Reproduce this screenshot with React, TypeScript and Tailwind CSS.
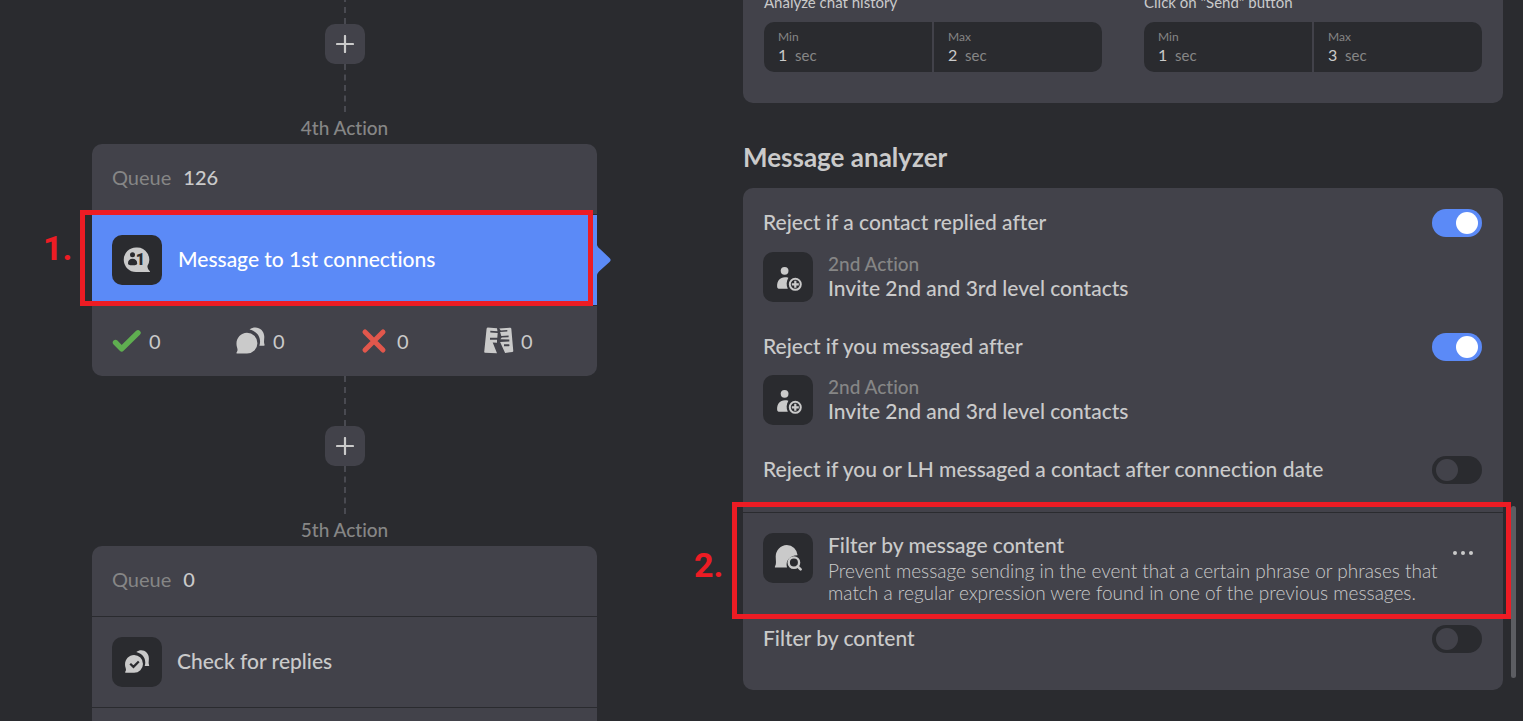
import type { ReactNode } from "react";

function MessageFirstIcon() {
  return (
    <svg viewBox="0 0 28 26" className="h-[26px] w-7" aria-hidden="true">
      <path d="M13 0.5a12.2 12.2 0 1 0 0 24.5h13.6c.5 0 .6-.5.3-.8-1.6-1.5-2.4-2.8-2.5-5.200A12.200 12.200 0 0 0 13 .5z" fill="#cacaca" />
      <circle cx="9.500" cy="7.800" r="2.500" fill="#2a2b2f" />
      <path d="M5 16.300c0-3 1.800-4.500 4.500-4.500s4.700 1.500 4.700 4.500c0 1.600-1 2-4.600 2s-4.600-.4-4.600-2z" fill="#2a2b2f" />
      <text x="12.800" y="18.300" fontFamily="Roboto, sans-serif" fontWeight="900" fontSize="16" fill="#2a2b2f">1</text>
    </svg>
  );
}

function InviteIcon() {
  return (
    <svg viewBox="-2.1 -3 28 28" className="size-7" aria-hidden="true">
      <circle cx="8.500" cy="4.800" r="3.900" fill="#cacaca" />
      <path d="M12.300 11.800C5 9.800 1 14 1 20.200c0 1.900.8 2.600 2.800 2.600h7.900c-1.700-3.400-1.500-7.300.6-11z" fill="#cacaca" />
      <circle cx="19.200" cy="18.300" r="5.500" fill="none" stroke="#cacaca" strokeWidth="2" />
      <path d="M19.200 14.800v7M15.700 18.300h7" stroke="#cacaca" strokeWidth="2.200" />
    </svg>
  );
}

function SearchMessageIcon() {
  return (
    <svg viewBox="0 0 28 28" className="size-7" aria-hidden="true">
      <path d="M12.800 1A11.300 11.300 0 0 0 1.700 12.300c0 4.500.9 7.500-.6 10-.5.8-.3 1.200.5 1.200H13c-1.800-6.500 2.500-12 10.600-12.200A11.300 11.300 0 0 0 12.800 1z" fill="#cacaca" />
      <circle cx="19.900" cy="18.600" r="5.200" fill="none" stroke="#cacaca" strokeWidth="2.400" />
      <path d="M23.600 22.300l3 3" stroke="#cacaca" strokeWidth="2.600" strokeLinecap="round" />
    </svg>
  );
}

function ChatBubbles({ check = false }: { check?: boolean }) {
  return (
    <>
      <path d="M11 5.800A10.200 10.200 0 0 1 11 26.600H1.300c-.9 0-1-.6-.6-1.300 1-1.500 1-2.300.5-4.300C-1.500 13.500 3.500 5.800 11 5.800z" fill="#cacaca" />
      <path d="M13.600 2.400C20-2.400 28.300 2 28.300 9.800c0 3-.8 4.900.2 7.600.3.900.1 1.400-.6 1.400h-4.500C25.800 10.800 21.500 4.500 13.600 2.400z" fill="#cacaca" />
      {check && <path d="M6.500 16l3.800 3.700 6.200-6.200" fill="none" stroke="#2a2b2f" strokeWidth="2.600" />}
    </>
  );
}

function TornPaper() {
  return (
    <>
      <path d="M3.500.6L13 1.200l.5 3.100-7.200-.5v1.700l7.400.5-.4 4.800H6v2h7v3l-4.300-.3 4.300 10.800L.7 25.800.2 24.900 2.600 1.400z" fill="#cacaca" />
      <path d="M15.300 1.400L26.500.7l.8.8 2 22.800-.8.8-7.400.8-5-10.900 9.200-.6v-1.800l-9-.3 1.500-1.700 6.800-.3V8.500l-7.300.4-1.200-4 7.200-.3V3l-6.500.4zM20 17.300v2h4.600c1.200 0 1.200-2 0-2z" fill="#cacaca" fillRule="evenodd" />
    </>
  );
}

function IconTile({ children }: { children: ReactNode }) {
  return (
    <span className="flex size-[50px] shrink-0 items-center justify-center rounded-[10px] bg-[#2a2b2f]">{children}</span>
  );
}

function Dashes({ tall = false }: { tall?: boolean }) {
  return (
    <span
      className={
        tall
          ? "block h-[50px] w-0 shrink-0 border-l-2 border-dashed border-[#494a51]"
          : "block h-12 w-0 shrink-0 border-l-2 border-dashed border-[#494a51]"
      }
    />
  );
}

function AddButton() {
  return (
    <button type="button" aria-label="Add action" className="flex size-10 shrink-0 items-center justify-center rounded-[10px] bg-[#42424a]">
      <svg viewBox="0 0 18 18" className="size-[18px]" aria-hidden="true">
        <path d="M9 1v16M1 9h16" stroke="#cacaca" strokeWidth="2.200" strokeLinecap="round" />
      </svg>
    </button>
  );
}

function StepLabel({ children }: { children: ReactNode }) {
  return <h3 className="flex h-8 shrink-0 items-center text-[19px] font-medium text-[#868686]">{children}</h3>;
}

function Queue({ count }: { count: number }) {
  return (
    <div className="flex h-[70px] items-center gap-3 px-5 pb-1 text-xl">
      <span className="text-[#868686]">Queue</span>
      <span className="font-medium">{count}</span>
    </div>
  );
}

function Stat({ label, icon }: { label: string; icon: ReactNode }) {
  return (
    <li className="flex w-[124px] shrink-0 items-center gap-[7px] text-xl last:w-auto">
      <svg viewBox="0 0 30 28" className="h-7 w-[30px]" role="img" aria-label={label}>
        {icon}
      </svg>
      <span>0</span>
    </li>
  );
}

function Toggle({ label, on = false }: { label: string; on?: boolean }) {
  return (
    <label className="flex h-7 items-center justify-between pr-px text-[21px] leading-[26px] font-medium">
      <span className="pb-[2px]">{label}</span>
      <input
        type="checkbox"
        defaultChecked={on}
        className="h-7 w-[50px] shrink-0 appearance-none rounded-full bg-[#2a2b2f] px-1 py-[3px] before:block before:size-[22px] before:rounded-full before:bg-[#42424a] checked:bg-[#5b8af7] checked:before:ml-5 checked:before:bg-white"
      />
    </label>
  );
}

function ActionRef() {
  return (
    <div className="flex items-center gap-[15px]">
      <IconTile>
        <InviteIcon />
      </IconTile>
      <div className="pb-[2px] font-medium">
        <p className="text-[19px] leading-6 text-[#868686]">2nd Action</p>
        <p className="text-[21px] leading-6">Invite 2nd and 3rd level contacts</p>
      </div>
    </div>
  );
}

function SecondsField({ label, value }: { label: string; value: number }) {
  return (
    <label className="flex flex-1 flex-col justify-center bg-[#2a2b2f] px-[14px]">
      <span className="text-xs leading-4 text-[#868686]">{label}</span>
      <span className="flex items-center gap-[5px] text-[15px] leading-5 text-[#868686]">
        <input type="text" inputMode="numeric" defaultValue={value} className="h-5 w-3 bg-transparent text-base text-[#cacaca] outline-none" />
        sec
      </span>
    </label>
  );
}

function Range({ title, min, max }: { title: string; min: number; max: number }) {
  return (
    <fieldset className="min-w-0 flex-1">
      <legend className="text-[15px] leading-6 whitespace-nowrap">{title}</legend>
      <div className="mt-2 flex h-[50px] gap-[2px] overflow-hidden rounded-[10px]">
        <SecondsField label="Min" value={min} />
        <SecondsField label="Max" value={max} />
      </div>
    </fieldset>
  );
}

function Marker({ children }: { children: ReactNode }) {
  return <span className="font-[Roboto,sans-serif] text-[34px] leading-10 font-bold text-[#ed1c24]">{children}</span>;
}

export default function App() {
  return (
    <main className="grid h-screen grid-cols-[689fr_834fr] overflow-hidden bg-[#2a2b2f] font-[Lato,'Open_Sans',sans-serif] text-[#cacaca] [font-variant-ligatures:none]">
      <section className="flex min-h-0 flex-col items-center overflow-hidden px-[92px]">
        <div className="flex h-6 shrink-0 items-end overflow-hidden">
          <Dashes tall />
        </div>
        <AddButton />
        <Dashes />
        <StepLabel>4th Action</StepLabel>

        <article className="w-full shrink-0 rounded-[10px] bg-[#42424a]">
          <Queue count={126} />
          <div className="relative flex h-[92px] items-center gap-4 border-y border-[#2a2b2f] bg-[#5b8af7] px-5 text-[21px] font-medium text-white">
            <IconTile>
              <MessageFirstIcon />
            </IconTile>
            <span className="pb-[2px]">Message to 1st connections</span>
            <svg viewBox="0 0 14 32" className="absolute top-[29px] left-full h-8 w-[14px]" aria-hidden="true">
              <path d="M0 1c.5 1.500 1 2.300 2.500 3.500l10 9.500c1.500 1.400 1.500 2.600 0 4l-10 9C1 28.500.5 29.300 0 31z" fill="#5b8af7" />
            </svg>
            <div className="absolute -top-[5px] right-1 -bottom-px -left-3 border-[5px] border-[#ed1c24]" />
            <div className="absolute top-[13px] -left-[49px]">
              <Marker>1.</Marker>
            </div>
          </div>
          <ul className="flex h-[70px] items-center px-5">
            <Stat
              label="Successful"
              icon={<path d="M3.500 15.500l6.200 6.300L26 5.800" fill="none" stroke="#5fae50" strokeWidth="5.400" strokeLinecap="round" strokeLinejoin="round" />}
            />
            <Stat label="Replied" icon={<ChatBubbles />} />
            <Stat label="Failed" icon={<path d="M5 5l18 18M23 5L5 23" stroke="#e2574c" strokeWidth="5" strokeLinecap="round" />} />
            <Stat label="Excluded" icon={<TornPaper />} />
          </ul>
        </article>

        <Dashes tall />
        <AddButton />
        <Dashes />
        <StepLabel>5th Action</StepLabel>

        <article className="w-full shrink-0 rounded-[10px] bg-[#42424a]">
          <Queue count={0} />
          <div className="flex h-[92px] items-center gap-[15px] border-y border-[#2a2b2f] px-5 text-[21px] font-medium">
            <IconTile>
              <svg viewBox="0 0 30 28" className="h-6 w-[27px]" aria-hidden="true">
                <ChatBubbles check />
              </svg>
            </IconTile>
            <span className="pb-[2px]">Check for replies</span>
          </div>
          <div className="h-[70px]" />
        </article>
      </section>

      <section className="relative min-h-0 overflow-hidden pr-5 pl-[54px]">
        <div className="-mt-[10px] flex gap-[42px] rounded-b-[10px] bg-[#42424a] px-[21px] pb-[31px]">
          <Range title="Analyze chat history" min={1} max={2} />
          <Range title={'Click on "Send" button'} min={1} max={3} />
        </div>

        <h2 className="mt-[38px] mb-[15px] text-[26px] leading-8 font-bold">Message analyzer</h2>

        <div className="rounded-[10px] bg-[#42424a] pb-[37px]">
          <div className="flex flex-col gap-[31px] border-b border-[#2a2b2f] px-5 pt-[21px] pb-7">
            <div className="flex flex-col gap-[15px]">
              <Toggle label="Reject if a contact replied after" on />
              <ActionRef />
            </div>
            <div className="flex flex-col gap-[14px]">
              <Toggle label="Reject if you messaged after" on />
              <ActionRef />
            </div>
            <Toggle label="Reject if you or LH messaged a contact after connection date" />
          </div>

          <div className="relative px-5 pt-5 pb-[21px]">
            <div className="flex items-start gap-[15px]">
              <IconTile>
                <SearchMessageIcon />
              </IconTile>
              <div className="min-w-0 flex-1">
                <h3 className="text-[21px] leading-6 font-medium">Filter by message content</h3>
                <p className="mt-[3px] text-[19px] leading-[22px] font-light">
                  Prevent message sending in the event that a certain phrase or phrases that
                  <br />
                  match a regular expression were found in one of the previous messages.
                </p>
              </div>
              <button type="button" aria-label="More options" className="mr-[10px] -ml-[15px] flex h-10 shrink-0 items-center gap-1">
                <span className="size-1 rounded-full bg-[#cacaca]" />
                <span className="size-1 rounded-full bg-[#cacaca]" />
                <span className="size-1 rounded-full bg-[#cacaca]" />
              </button>
            </div>
            <div className="absolute -top-[11px] -right-2 bottom-[6px] -left-[11px] border-[5px] border-[#ed1c24]" />
            <div className="absolute top-[32px] -left-[49px]">
              <Marker>2.</Marker>
            </div>
          </div>
          <div className="px-5">
            <Toggle label="Filter by content" />
          </div>
        </div>

        <div className="absolute top-[506px] right-[7px] h-[172px] w-[5px] rounded-full bg-[#5c5d62]" />
      </section>
    </main>
  );
}
